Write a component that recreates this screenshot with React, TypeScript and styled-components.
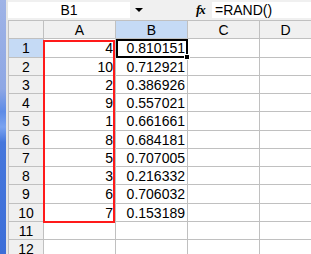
import React from "react";
import styled, { createGlobalStyle } from "styled-components";

const GlobalStyle = createGlobalStyle`
  html, body { margin: 0; padding: 0; background: #ffffff; }
  body { font-family: "Liberation Sans", Arial, sans-serif; }
`;

const Frame = styled.div`
  display: flex;
  width: 311px;
  height: 254px;
  overflow: hidden;
  background: #f0f0f0;
`;

const SideStrip = styled.div`
  width: 6px;
  flex: none;
  background: linear-gradient(
    to bottom,
    #9fb3e6 0%,
    #8ea7e4 35%,
    #5d8be6 44%,
    #7aa3f0 50%,
    #4677dc 56%,
    #3c6ed8 100%
  );
`;

const SideEdge = styled.div`
  width: 2px;
  flex: none;
  background: #e6e6e6;
`;

const Main = styled.div`
  flex: 1;
  display: flex;
  flex-direction: column;
  min-width: 0;
`;

const FormulaBar = styled.div`
  height: 20px;
  flex: none;
  display: flex;
  align-items: center;
  background: #f0f0f0;
`;

const NameBox = styled.div`
  width: 122px;
  height: 16px;
  background: #ffffff;
  display: flex;
  align-items: center;
  justify-content: center;
  font-size: 14px;
  color: #000;
`;

const DropArrow = styled.div`
  margin-left: 5px;
  width: 0;
  height: 0;
  border-left: 4px solid transparent;
  border-right: 4px solid transparent;
  border-top: 4px solid #000;
`;

const FxLabel = styled.div`
  margin-left: 53px;
  width: 14px;
  font-family: "Liberation Serif", "Times New Roman", serif;
  font-style: italic;
  font-weight: bold;
  font-size: 13px;
  color: #000;
  letter-spacing: -1px;
`;

const FormulaInput = styled.div`
  flex: 1;
  height: 16px;
  margin-left: 2px;
  background: #ffffff;
  display: flex;
  align-items: center;
  padding-left: 3px;
  font-size: 14px;
  color: #000;
`;

const Sheet = styled.div`
  flex: 1;
  display: grid;
  grid-template-columns: 34px 71px 71px 71px 1fr;
  grid-template-rows: 17px 18px 17px 17px 17px 18px 17px 17px 17px 18px 17px 17px 17px;
  gap: 1px;
  padding: 1px 0 0 1px;
  background: #c0c0c0;
  font-size: 14px;
  color: #000;
`;

type Pos = { $row: number; $col: number };

const ColHeader = styled.div<Pos & { $selected?: boolean }>`
  grid-row: ${(p) => p.$row};
  grid-column: ${(p) => p.$col};
  background: ${(p) => (p.$selected ? "#c5daf5" : "#f0f0f0")};
  display: flex;
  align-items: center;
  justify-content: center;
  line-height: 1;
`;

const RowHeader = styled.div<Pos & { $selected?: boolean }>`
  grid-row: ${(p) => p.$row};
  grid-column: ${(p) => p.$col};
  background: ${(p) => (p.$selected ? "#c5daf5" : "#f0f0f0")};
  display: flex;
  align-items: center;
  justify-content: center;
  line-height: 1;
`;

const Cell = styled.div<Pos>`
  grid-row: ${(p) => p.$row};
  grid-column: ${(p) => p.$col};
  background: #ffffff;
  display: flex;
  align-items: center;
  justify-content: flex-end;
  padding-right: 2px;
  line-height: 1;
`;

const RedBox = styled.div`
  grid-column: 2;
  grid-row: 2 / span 10;
  margin: 1px 0 -2px -1px;
  border: 2px solid #ff1a1a;
  pointer-events: none;
  z-index: 1;
`;

const ActiveCell = styled.div`
  grid-column: 3;
  grid-row: 2;
  margin: 0 -1px -1px 0;
  border: 2px solid #000;
  position: relative;
  pointer-events: none;
  z-index: 2;
`;

const FillHandle = styled.div`
  position: absolute;
  right: -4px;
  bottom: -4px;
  width: 4px;
  height: 4px;
  background: #000;
  border: 1px solid #fff;
`;

const colA = [4, 10, 2, 9, 1, 8, 5, 3, 6, 7];
const colB = [
  "0.810151",
  "0.712921",
  "0.386926",
  "0.557021",
  "0.661661",
  "0.684181",
  "0.707005",
  "0.216332",
  "0.706032",
  "0.153189",
];
const letters = ["", "A", "B", "C", "D"];

export default function App() {
  const rows = Array.from({ length: 12 }, (_, i) => i);
  return (
    <>
      <GlobalStyle />
      <Frame>
        <SideStrip />
        <SideEdge />
        <Main>
          <FormulaBar>
            <NameBox>B1</NameBox>
            <DropArrow />
            <FxLabel>fx</FxLabel>
            <FormulaInput>=RAND()</FormulaInput>
          </FormulaBar>
          <Sheet>
            {letters.map((l, c) => (
              <ColHeader key={c} $row={1} $col={c + 1} $selected={l === "B"}>
                {l}
              </ColHeader>
            ))}
            {rows.map((i) => (
              <React.Fragment key={i}>
                <RowHeader $row={i + 2} $col={1} $selected={i === 0}>
                  {i + 1}
                </RowHeader>
                <Cell $row={i + 2} $col={2}>{colA[i] ?? ""}</Cell>
                <Cell $row={i + 2} $col={3}>{colB[i] ?? ""}</Cell>
                <Cell $row={i + 2} $col={4} />
                <Cell $row={i + 2} $col={5} />
              </React.Fragment>
            ))}
            <RedBox />
            <ActiveCell>
              <FillHandle />
            </ActiveCell>
          </Sheet>
        </Main>
      </Frame>
    </>
  );
}
